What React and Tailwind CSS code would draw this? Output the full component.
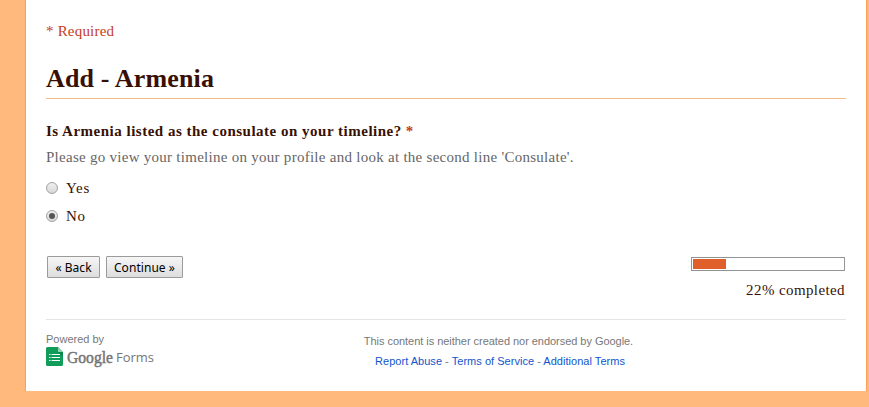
import React, { useState } from 'react';

function RadioOption({ label, checked, onSelect }) {
  return (
    <label className="flex h-5 items-center">
      <input type="radio" name="consulate" className="sr-only" checked={checked} onChange={onSelect} />
      <span className="flex h-3 w-3 items-center justify-center rounded-full border border-[#a3a3a3] bg-linear-to-b from-[#efefef] to-[#d8d8d8]">
        {checked && <span className="h-1.5 w-1.5 rounded-full bg-[#555]" />}
      </span>
      <span className="-mt-px ml-2 text-[15px] leading-5 tracking-[0.7px] text-[#381003]">{label}</span>
    </label>
  );
}

function FormButton({ className, children }) {
  return (
    <button
      type="button"
      className={`h-[22px] rounded-[1px] border border-[#9b9b9b] bg-linear-to-b from-[#f6f6f6] to-[#dddddd] pt-px text-center font-['Noto_Sans',sans-serif] text-[12px] leading-5 tracking-[0.05px] whitespace-nowrap text-black ${className}`}
    >
      {children}
    </button>
  );
}

function ProgressBar({ percent }) {
  return (
    <div className="mt-px flex flex-col items-end">
      <div className="h-[14px] w-[154px] border border-[#949494] bg-white p-px">
        <div className="h-full bg-[#e0602b]" style={{ width: `${percent}%` }} />
      </div>
      <div className="mt-[9px] text-[15px] leading-5 tracking-[0.4px] text-[#381003]">{percent}% completed</div>
    </div>
  );
}

function FormsLogo() {
  return (
    <svg width="110" height="24" viewBox="0 0 110 24" className="block">
      <path d="M1.5 0H12l5 5v12.5a1.5 1.5 0 0 1-1.5 1.5h-14A1.5 1.5 0 0 1 0 17.5v-16A1.5 1.5 0 0 1 1.5 0Z" fill="#109d59" />
      <path d="M12 0l5 5h-5Z" fill="#8fd0ae" />
      <path d="M12 5h5v5Z" fill="#0c864b" />
      <path d="M3 7.5h1.500M3 10.500h1.500M3 13.500h1.500M5.500 7.500H14M5.500 10.500H14M5.500 13.500H14" stroke="#fff" strokeWidth="1.200" />
      <text x="21" y="16" textLength="46" lengthAdjust="spacingAndGlyphs" fontFamily="Liberation Serif, serif" fontSize="17.500" fill="#757575" stroke="#757575" strokeWidth="0.500">
        Google
      </text>
      <text x="70" y="15" textLength="38" lengthAdjust="spacingAndGlyphs" fontFamily="Open Sans, sans-serif" fontSize="12.500" fill="#757575">
        Forms
      </text>
    </svg>
  );
}

export default function App() {
  const [answer, setAnswer] = useState('No');

  return (
    <div className="h-[407px] w-full overflow-hidden bg-[#ffb97c] pr-0.5 pl-[25px] font-['Liberation_Serif',serif]">
      <div className="h-[391px] border-x border-[#ff9f55] bg-white px-5 pt-[21px]">
        <p className="text-[15px] leading-5 tracking-[0.2px] text-[#c43b1d]">* Required</p>

        <h2 className="mt-[22px] border-b border-[#f3bb85] pb-[3px] text-[26px] leading-8 font-bold tracking-[0.15px] text-[#381003]">
          Add - Armenia
        </h2>

        {/* Question */}
        <div className="mt-[22px] text-[15px] leading-5 font-bold text-[#381003]">
          <span className="tracking-[0.5px]">Is Armenia listed as the consulate on your timeline?</span>
          <span className="ml-1 font-bold text-[#c43b1d]">*</span>
        </div>
        <p className="mt-1.5 text-[15px] leading-5 tracking-[0.27px] text-[#666]">
          Please go view your timeline on your profile and look at the second line 'Consulate'.
        </p>
        <div className="mt-[11px] space-y-2">
          {['Yes', 'No'].map((option) => (
            <RadioOption key={option} label={option} checked={answer === option} onSelect={() => setAnswer(option)} />
          ))}
        </div>

        {/* Navigation */}
        <div className="mt-[30px] flex h-16 items-start justify-between border-b border-[#e5e5e5] pr-px pl-px">
          <div className="flex gap-1.5">
            <FormButton className="w-[53px]">« Back</FormButton>
            <FormButton className="w-[77px]">Continue »</FormButton>
          </div>
          <ProgressBar percent={22} />
        </div>

        {/* Footer */}
        <footer className="flex pt-[11px] font-['Liberation_Sans',sans-serif] text-[11px] text-[#777]">
          <div className="w-[200px]">
            <div className="h-4 leading-4">Powered by</div>
            <FormsLogo />
          </div>
          <div className="w-[505px] text-center leading-5">
            <p className="tracking-[-0.04px]">This content is neither created nor endorsed by Google.</p>
            <p className="ml-[3px] tracking-[0.03px]">
              <a href="#" className="text-[#1155cc]">Report Abuse</a> - <a href="#" className="text-[#1155cc]">Terms of Service</a> - <a href="#" className="text-[#1155cc]">Additional Terms</a>
            </p>
          </div>
        </footer>
      </div>
    </div>
  );
}
